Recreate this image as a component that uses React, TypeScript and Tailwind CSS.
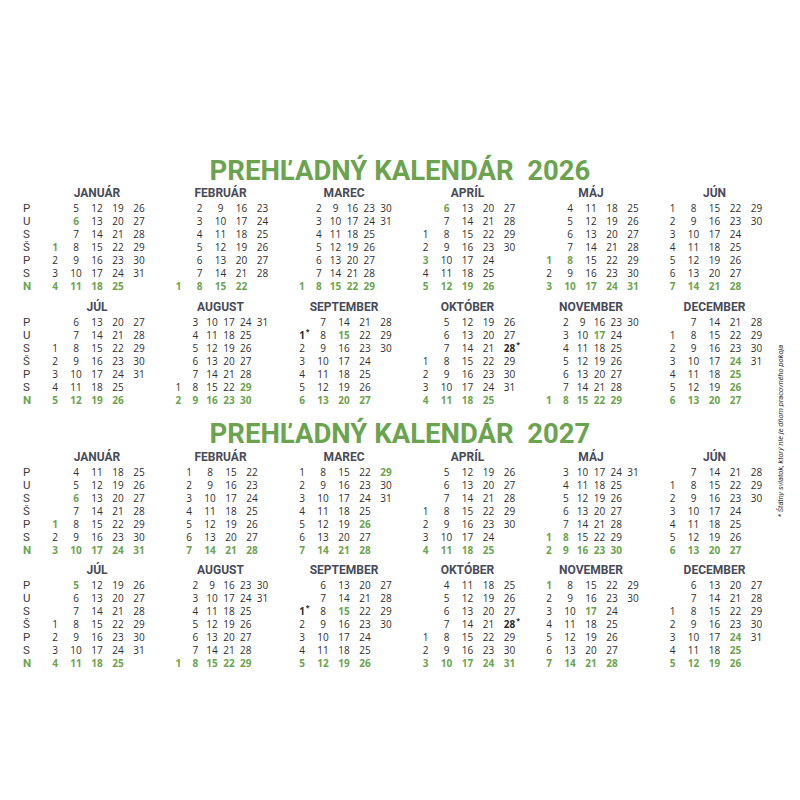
import React from 'react';

const MONTHS = [
  'JANUÁR', 'FEBRUÁR', 'MAREC', 'APRÍL', 'MÁJ', 'JÚN',
  'JÚL', 'AUGUST', 'SEPTEMBER', 'OKTÓBER', 'NOVEMBER', 'DECEMBER',
];
const LETTERS = ['P', 'U', 'S', 'Š', 'P', 'S', 'N'];

// sviatky a dni pracovného pokoja (mesiac-deň)
const HOLIDAYS: Record<number, string[]> = {
  2026: ['1-1', '1-6', '4-3', '4-6', '5-1', '5-8', '7-5', '8-29', '9-15', '11-1', '11-17', '12-24', '12-25', '12-26'],
  2027: ['1-1', '1-6', '3-26', '3-29', '5-1', '5-8', '7-5', '8-29', '9-15', '11-1', '11-17', '12-24', '12-25', '12-26'],
};
// štátne sviatky, ktoré nie sú dňom pracovného pokoja
const STARRED = ['9-1', '10-28'];

function monthColumns(year: number, month: number) {
  const first = (new Date(year, month, 1).getDay() + 6) % 7;
  const days = new Date(year, month + 1, 0).getDate();
  const ncols = Math.ceil((first + days) / 7);
  const cols: (number | null)[][] = Array.from({ length: ncols }, () => Array(7).fill(null));
  for (let d = 1; d <= days; d++) {
    const idx = first + d - 1;
    cols[Math.floor(idx / 7)][idx % 7] = d;
  }
  return cols;
}

function DayCell({ year, month, day, row }: { year: number; month: number; day: number | null; row: number }) {
  if (day === null) return <div className="h-[13px]" />;
  const key = `${month + 1}-${day}`;
  const green = row === 6 || HOLIDAYS[year].includes(key);
  const star = STARRED.includes(key);
  return (
    <div
      className={
        'h-[13px] leading-[13px] text-center ' +
        (green ? 'text-[#6ca350] font-bold' : star ? 'text-[#2b2b2b] font-bold' : 'text-[#2f2f2f]')
      }
    >
      <span className="relative">
        {day}
        {star && <span className="absolute left-full top-0 pl-[1px] text-[7px] leading-none">*</span>}
      </span>
    </div>
  );
}

function Month({ year, month }: { year: number; month: number }) {
  const cols = monthColumns(year, month);
  return (
    <div className="w-[123.5px] shrink-0">
      <div className="w-[100px]">
        <div className="h-[17px] leading-[17px] text-center font-['Roboto',sans-serif] font-bold text-[12px] text-[#484b57]">
          {MONTHS[month]}
        </div>
        <div className={'flex justify-center ' + (cols.length === 6 ? 'gap-[1px]' : 'gap-[5px]')}>
          {cols.map((col, ci) => (
            <div key={ci} className="w-4 flex flex-col">
              {col.map((day, ri) => (
                <DayCell key={ri} year={year} month={month} day={day} row={ri} />
              ))}
            </div>
          ))}
        </div>
      </div>
    </div>
  );
}

function HalfYear({ year, start }: { year: number; start: number }) {
  return (
    <div className="flex">
      <div className="w-[47px] shrink-0 pl-[23px]">
        <div className="h-[17px]" />
        {LETTERS.map((l, i) => (
          <div
            key={i}
            className={
              'h-[13px] leading-[13px] text-[11.5px] font-[\'Roboto\',sans-serif] ' +
              (i === 6 ? 'text-[#6ca350] font-bold' : 'text-[#3c3c3c]')
            }
          >
            {l}
          </div>
        ))}
      </div>
      {[0, 1, 2, 3, 4, 5].map((i) => (
        <Month key={i} year={year} month={start + i} />
      ))}
    </div>
  );
}

function Year({ year }: { year: number }) {
  return (
    <div className="flex flex-col">
      <div className="h-[29.5px] leading-[29.5px] text-center whitespace-pre font-['Roboto',sans-serif] font-bold text-[27.5px] text-[#6ca350]">
        {`PREHĽADNÝ KALENDÁR  ${year}`}
      </div>
      <HalfYear year={year} start={0} />
      <div className="h-[5.5px]" />
      <HalfYear year={year} start={6} />
    </div>
  );
}

export default function App() {
  return (
    <div className="relative w-[800px] h-[800px] bg-white font-['Open_Sans',sans-serif] text-[10px] overflow-hidden">
      <div className="flex flex-col pt-[155.5px] gap-[12.5px]">
        <Year year={2026} />
        <Year year={2027} />
      </div>
      <div className="absolute left-[781px] top-[431px] -translate-x-1/2 -translate-y-1/2 -rotate-90 whitespace-nowrap italic text-[7.5px] text-[#333] font-['Roboto',sans-serif]">
        * Štátny sviatok, ktorý nie je dňom pracovného pokoja
      </div>
    </div>
  );
}
